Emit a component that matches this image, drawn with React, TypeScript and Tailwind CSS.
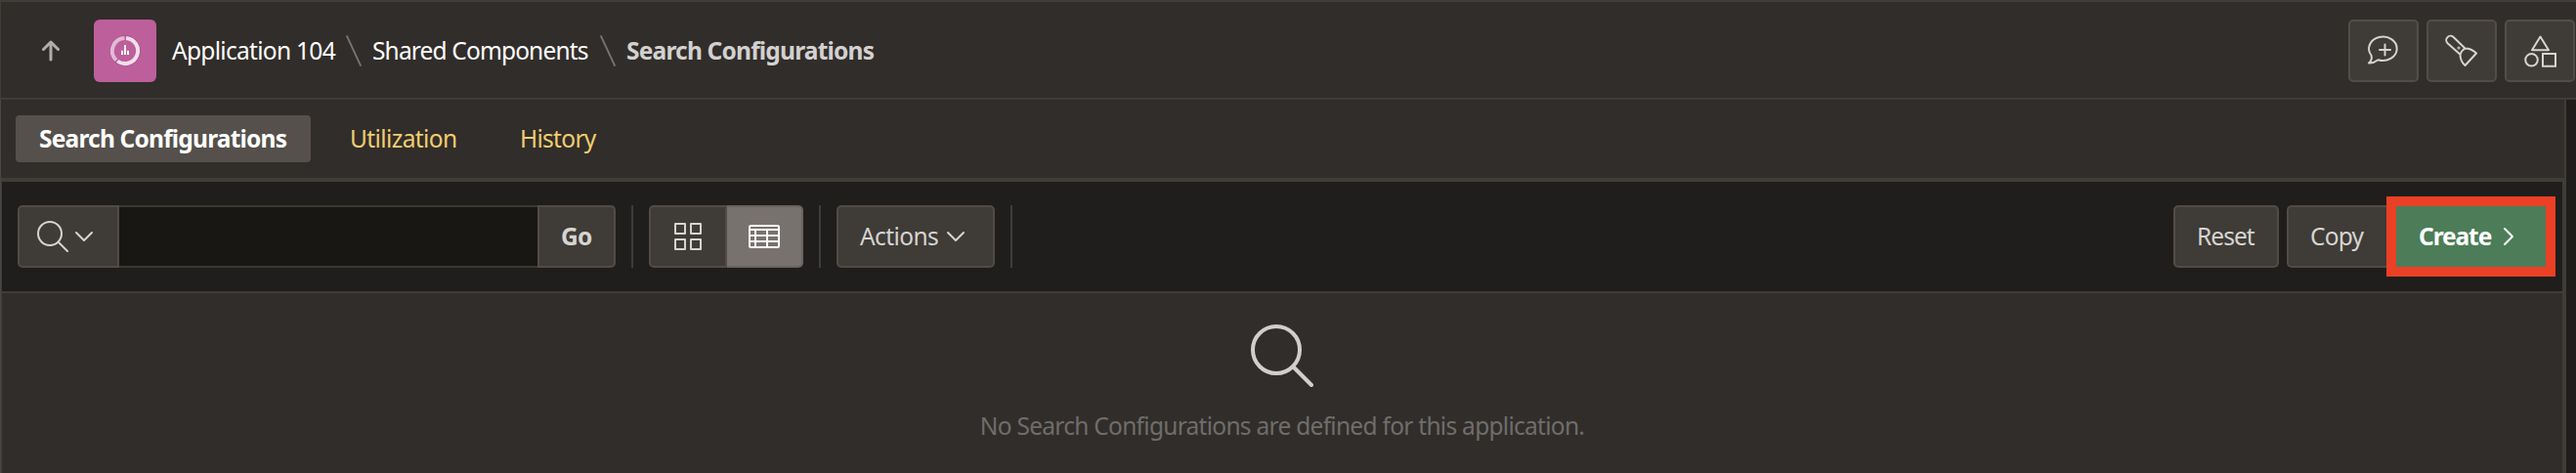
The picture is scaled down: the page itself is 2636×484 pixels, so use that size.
import React from 'react';

const icon = { fill: 'none', stroke: 'currentColor', strokeLinecap: 'round', strokeLinejoin: 'round' } as const;

const headBtn =
  'flex h-16 w-[72px] shrink-0 items-center justify-center rounded-[5px] border-2 border-[#524d48] bg-[#3f3b36] text-[#d5d4d2]';
const btn = 'flex h-16 shrink-0 items-center border-2 border-[#524b45] bg-[#3f3b36] text-[#d5d4d2]';

function Search({ className, stroke }: { className: string; stroke: number }) {
  return (
    <svg className={className} viewBox="0 0 64 64" {...icon} strokeWidth={stroke}>
      <circle cx="26" cy="26" r={26 - stroke / 2} />
      <path d={`M44 44L${64 - stroke / 2} ${64 - stroke / 2}`} />
    </svg>
  );
}

function ChevronDown({ className }: { className: string }) {
  return (
    <svg className={className} viewBox="0 0 20 12" {...icon} strokeWidth="2">
      <path d="M2 2L10 10L18 2" />
    </svg>
  );
}

function Slash() {
  return (
    <svg className="h-[34px] w-[38px] shrink-0 text-[#767370]" viewBox="0 0 38 34" {...icon} strokeWidth="1.8">
      <path d="M12 2L26 32" />
    </svg>
  );
}

function Divider({ className }: { className: string }) {
  return <div className={`h-16 w-0.5 shrink-0 bg-[#403c38] ${className}`} />;
}

function Breadcrumbs() {
  return (
    <nav className="flex items-center">
      <svg className="ml-[42px] h-[22px] w-5 text-[#b0aeac]" viewBox="0 0 20 22" {...icon} strokeWidth="3">
        <path d="M10 20V2M2.500 9.500L10 2l7.500 7.500" />
      </svg>
      <div className="ml-[34px] flex size-16 items-center justify-center rounded-[6px] bg-[#bd5f9b]">
        <svg className="size-8" viewBox="0 0 32 32" fill="none">
          <circle cx="16" cy="16" r="15.500" stroke="#a04c85" strokeWidth="0.800" />
          <path d="M17 2.900A13.100 13.100 0 1 1 8.200 26.500" stroke="#f2deec" strokeWidth="4" />
          <path d="M7 25.500A13.100 13.100 0 0 1 15.400 2.900" stroke="#e2bad4" strokeWidth="4" />
          <path d="M12 15.700h2V20h-2zM15 10h2v10h-2zM18 15.700h2V20h-2z" fill="#fff" />
        </svg>
      </div>
      <span className="ml-4 w-[167px] tracking-[-0.7px]">Application 104</span>
      <Slash />
      <span className="w-[222px] tracking-[-0.85px]">Shared Components</span>
      <Slash />
      <span className="font-bold tracking-[-0.8px] text-[#d3d1d0]">Search Configurations</span>
    </nav>
  );
}

function HeaderButtons() {
  return (
    <div className="mr-px flex gap-2">
      <button className={headBtn}>
        <svg className="size-9" viewBox="0 0 36 36" {...icon} strokeWidth="2">
          <path d="M5.500 22.500A14.300 12.200 0 1 1 12.500 27.200C9.500 29.500 6.500 30.700 3 30.500C5.500 28.500 6.500 26 5.500 22.500Z" />
          <path d="M19.500 11.500v11M14 17h11" />
        </svg>
      </button>
      <button className={headBtn}>
        <svg className="size-9" viewBox="0 0 36 36" {...icon} strokeWidth="2">
          <path d="M3.600 10.300A4 4 0 0 1 9.600 4L21.500 15.500C26 15.500 29.500 17 33 20.500L21.500 33C18 30 16.500 27 16.500 21.800L3.600 10.300ZM16.500 21.800C17.500 18.500 19 17 21.500 15.500" />
          <circle cx="15" cy="15" r="0.500" />
        </svg>
      </button>
      <button className={headBtn}>
        <svg className="size-9" viewBox="0 0 36 36" fill="none" stroke="currentColor" strokeWidth="2">
          <path d="M18.500 3.500L27 17.200H10Z" strokeLinejoin="round" />
          <circle cx="9.500" cy="27.300" r="6.300" />
          <path d="M21 21h13v12.700h-13z" />
        </svg>
      </button>
    </div>
  );
}

function Toolbar() {
  return (
    <div className="flex h-[114px] items-center border-b-2 border-[#403c38] bg-[#201e1c] pr-[7px] pl-4">
      <button className={`${btn} w-[104px] rounded-l-[5px] pl-[18px]`}>
        <Search className="size-8" stroke={4} />
        <ChevronDown className="ml-1.5 h-3 w-5" />
      </button>
      <div className="h-16 w-[428px] border-y-2 border-[#3b3832] bg-[#191714]" />
      <button className={`${btn} w-20 rounded-r-[5px] pl-[22px] font-bold tracking-[-0.8px]`}>Go</button>
      <Divider className="ml-4" />
      <button className={`${btn} ml-4 w-20 rounded-l-[5px] pl-[22px]`}>
        <svg className="size-[30px]" viewBox="0 0 30 30" {...icon} strokeWidth="2">
          <path d="M3 2h10v10H3zM19 2h10v10H19zM3 18h10v10H3zM19 18h10v10H19z" />
        </svg>
      </button>
      <button className="flex h-16 w-[78px] items-center rounded-r-[5px] border-y-2 border-r-2 border-[#69635f] bg-[#78726e] pl-[22px] text-white">
        <svg className="h-6 w-8" viewBox="0 0 32 24" fill="none" stroke="currentColor" strokeWidth="2">
          <rect x="1" y="1" width="30" height="22" rx="1.500" />
          <path d="M1 5h30M1 11h30M1 17h30M7 5v18M19 5v18" />
        </svg>
      </button>
      <Divider className="ml-4" />
      <button className={`${btn} ml-4 w-[162px] rounded-[5px] pl-[22px]`}>
        <span className="w-[88px] text-left tracking-[-0.6px]">Actions</span>
        <ChevronDown className="h-3 w-5" />
      </button>
      <Divider className="ml-4" />
      <button className={`${btn} ml-auto w-[108px] rounded-[5px] pl-[22px] tracking-[-0.95px]`}>Reset</button>
      <button className={`${btn} ml-2 w-[102px] rounded-l-[5px] border-r-0 pl-[22px] tracking-[-0.8px]`}>Copy</button>
      <button className="flex h-[82px] w-[173px] items-center border-10 border-[#ea4025] bg-[#4c7d58] pl-[23px] text-white">
        <span className="w-[86px] text-left font-bold tracking-[-1.1px]">Create</span>
        <svg className="h-5 w-3" viewBox="0 0 12 20" {...icon} strokeWidth="2">
          <path d="M2 2L10 10L2 18" />
        </svg>
      </button>
    </div>
  );
}

export default function App() {
  return (
    <div className="flex h-[484px] w-[2636px] flex-col overflow-hidden bg-[#201e1c] font-['Noto_Sans','Open_Sans',sans-serif] text-[24.5px] leading-[34px] whitespace-nowrap text-white">
      <header className="flex h-[102px] shrink-0 items-center justify-between border-y-2 border-[#403c38] bg-[#312d2a] pt-0.5 shadow-[inset_1px_0_0_#403c38]">
        <Breadcrumbs />
        <HeaderButtons />
      </header>
      <div className="flex w-[2626px] flex-1 flex-col border-r-2 border-l border-[#403c38] border-l-[#4a4642] bg-[#312d2a]">
        <nav className="flex h-20 shrink-0 items-center pl-[15px] text-[#f2cd70]">
          <span className="flex h-12 w-[302px] items-center rounded-[4px] bg-[#55504b] pl-6 font-bold tracking-[-0.8px] text-white">
            Search Configurations
          </span>
          <span className="ml-10 w-[174px] tracking-[-0.6px]">Utilization</span>
          <span className="tracking-[-0.7px]">History</span>
        </nav>
        <main className="flex flex-1 flex-col border-t-4 border-r-2 border-l border-[#403c38]">
          <Toolbar />
          <div className="flex flex-col items-center pt-8">
            <Search className="size-16 text-[#d0cfce]" stroke={4} />
            <p className="mt-[23px] tracking-[-0.72px] text-[#6f6d6b]">
              No Search Configurations are defined for this application.
            </p>
          </div>
        </main>
      </div>
    </div>
  );
}
